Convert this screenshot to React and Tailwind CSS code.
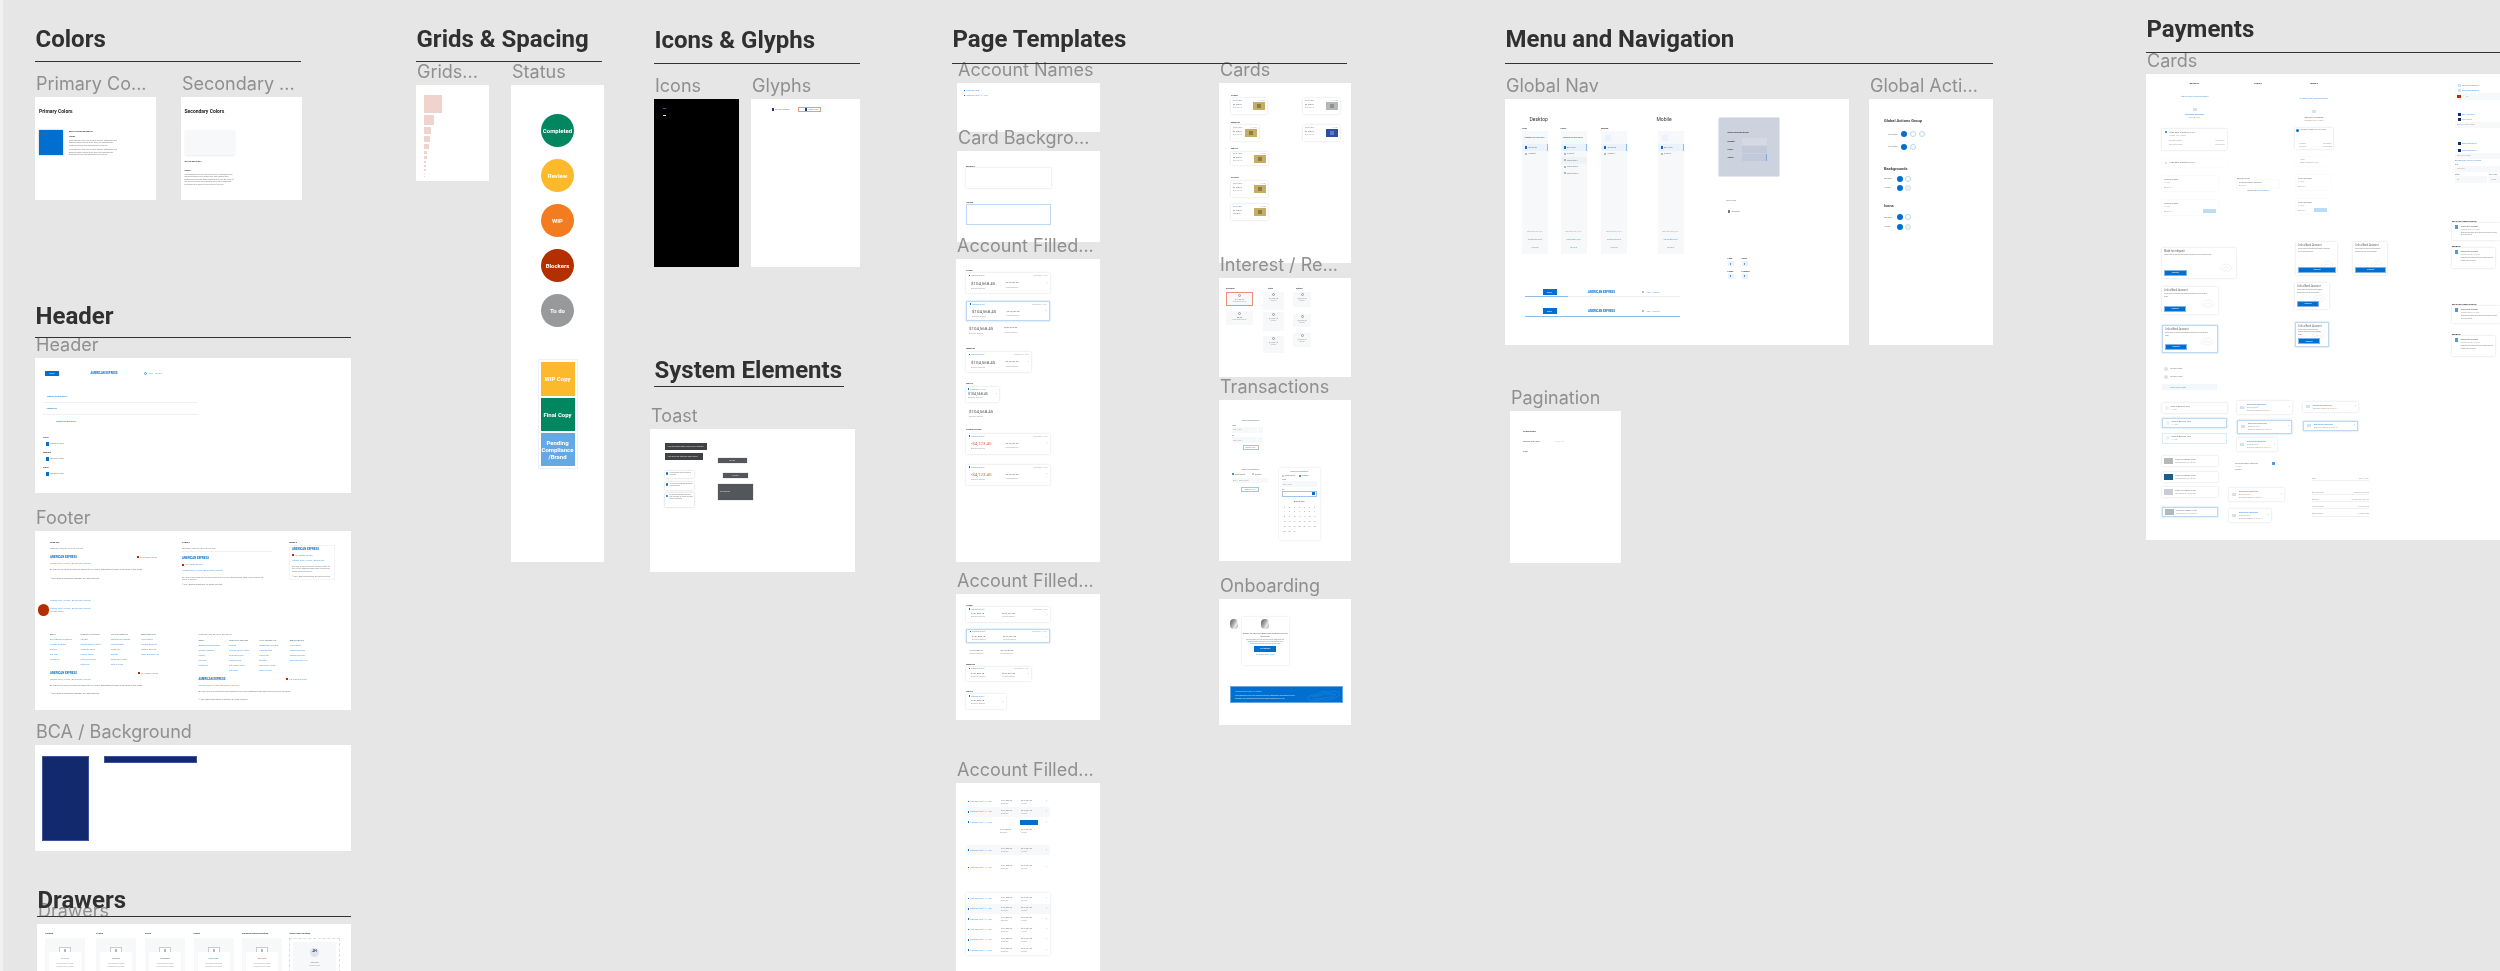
import React from "react";

// text styles for the tiny copy inside the board thumbnails
const tiny = "text-[2px] leading-[3px] text-[#777777]";
const tinyDark = "text-[2px] leading-[3px] text-[#555555]";
const sub = "text-[1.8px] leading-[3px] text-[#a6a6a6]";
const subDark = "text-[1.8px] leading-[3px] text-[#666666]";
const subRed = "text-[1.8px] leading-[3px] text-[#d9644a]";
const subSm = "text-[1.6px] leading-[2.5px] text-[#a6a6a6]";
const link = "text-[2px] leading-[3px] text-[#4a9be4]";
const linkBold = "text-[2.2px] leading-[3px] font-bold text-[#4a9be4]";
const head = "text-[2.2px] leading-[3px] font-bold text-[#333333]";
const amex = "text-[2.8px] leading-[3px] font-bold text-[#006fcf]";
const amexSm = "text-[2.1px] leading-[3px] font-bold text-[#2f86d6]";
const para = "whitespace-normal text-[1.9px] leading-[2.5px] text-[#808080]";
const paraSm = "whitespace-normal text-[1.6px] leading-[2.2px] text-[#808080]";
const money = "text-[4.4px] leading-[5px] text-[#555555]";
const moneyRed = "text-[4.4px] leading-[5px] text-[#d9644a]";
const moneySm = "text-[2.4px] leading-[3px] text-[#666666]";

const COPY = "Card Members can view account activity, statements and payment details online at any time, and manage their preferences from this page whenever they like.";
const LONG = "All users of our online services are subject to our Privacy Statement and agree to be bound by the Terms of Service.";
const shadow = "shadow-[0_0_2px_rgba(0,0,0,0.16)]";
const hover = "border-[0.5px] border-[#bcd8f3] shadow-[0_0_2px_rgba(0,111,207,0.3)]";

const Frame = ({ label, className, box, children }) => (
  <section className={`absolute flex flex-col ${className}`}>
    <h3 className="h-[26px] pl-px text-[18px] leading-[26px] font-normal font-['Inter',sans-serif] text-[#8f8f8f]">{label}</h3>
    <div className={box}>{children}</div>
  </section>
);

const Heading = ({ className, children }) => (
  <header className={`absolute border-b-[1.5px] border-[#333333] ${className}`}>
    <h2 className="pl-[0.5px] text-[24px] leading-[30px] font-bold text-[#303030]">{children}</h2>
  </header>
);

const Chevron = ({ className = "" }) => <span className={`text-[3.5px] leading-[3px] text-[#4a9be4] ${className}`}>›</span>;

const HeaderBar = () => (
  <div className="flex items-center h-[6px]">
    <div className="flex w-[14px] h-[5.5px] items-center justify-center bg-[#006fcf] text-[2px] text-white">Menu</div>
    <p className={`${amex} ml-[31.6px]`}>AMERICAN EXPRESS</p>
    <div className="flex items-center gap-[2px] ml-[27px]">
      <span className="size-[2.4px] rounded-full border-[0.4px] border-[#4a9be4]" />
      <p className={link}>Help</p>
      <p className={link}>Log Out</p>
    </div>
  </div>
);

const statusCircles = [
  ["bg-[#00875f]", "Completed"], ["bg-[#fdb92c]", "Review"], ["bg-[#f27c1f]", "WIP"], ["bg-[#b32f00]", "Blockers"], ["bg-[#97999b]", "To do"],
];
const statusTiles = [
  ["bg-[#fdb92c] h-[34px]", "WIP Copy"], ["bg-[#00875f] h-[33px]", "Final Copy"], ["bg-[#66a9e2] h-[33px]", "Pending Compliance /Brand"],
];
const gridSizes = ["size-[18px]", "size-[10px]", "size-[7px]", "size-[6px]", "size-[5px]", "size-[3px]", "size-[3px]", "size-[2px]", "size-[2px]", "size-[1.5px]", "size-[1px]", "size-[1px]"];

const Colors = () => (
  <div className="flex flex-col pl-[4px] pt-[11px]">
    <p className="text-[5px] leading-[6px] font-bold text-[#222222]">Primary Colors</p>
    <div className="flex gap-[6px] mt-[16px]">
      <div className="w-[24px] h-[25px] bg-[#006fcf] shadow-[0_0_2px_rgba(0,0,0,0.3)]" />
      <div className="flex flex-col w-[53px]">
        <p className={head}>BRIGHT BLUE 0x006FCF</p>
        <p className={`${head} mt-[1.5px]`}>Usage</p>
        <p className={`${para} mt-[1px]`}>{COPY}</p>
        <p className={`${para} mt-[2px]`}>{COPY}</p>
      </div>
    </div>
  </div>
);

const SecondaryColors = () => (
  <div className="flex flex-col pl-[3.5px] pt-[11px]">
    <p className="text-[5px] leading-[6px] font-bold text-[#222222]">Secondary Colors</p>
    <div className="w-[50px] h-[25px] mt-[16px] rounded-[1px] bg-[#f7f8f9] shadow-[0_1px_2px_rgba(0,0,0,0.08)]" />
    <p className={`${head} mt-[4.5px]`}>WHITE 0xF7F8F9</p>
    <p className={`${head} mt-[6px]`}>Usage</p>
    <p className={`${para} w-[49px] mt-[1px]`}>{COPY} {LONG}</p>
  </div>
);

const Status = () => (
  <div className="flex flex-col items-center pt-[28.5px]">
    <div className="flex flex-col gap-[12px]">
      {statusCircles.map(([bg, name]) => (
        <div key={name} className={`flex size-[33px] items-center justify-center rounded-full text-[6px] font-bold text-white ${bg}`}>{name}</div>
      ))}
    </div>
    <div className="flex flex-col gap-[2px] mt-[32px] p-[2px] border-[0.5px] border-[#f0eefa]">
      {statusTiles.map(([bg, name]) => (
        <div key={name} className={`flex w-[34px] items-center justify-center whitespace-normal text-center text-[6px] leading-[7px] font-bold text-white ${bg}`}>{name}</div>
      ))}
    </div>
  </div>
);

const HeaderFrame = () => (
  <div className="flex flex-col pl-[10px] pt-[12.6px]">
    <HeaderBar />
    <div className="flex flex-col w-[155px] mt-[15px] -ml-[2px]">
      <div className="flex h-[11.5px] items-center pl-[4px] border-b-[0.4px] border-[#f0f0f0]"><p className={amexSm}>AMERICAN EXPRESS</p></div>
      <div className="flex h-[11.5px] items-center pl-[3.5px] border-b-[0.4px] border-[#f0f0f0]"><p className={amexSm}>AMERICAN</p></div>
      <div className="flex h-[13px] items-center pl-[13px]"><p className={amexSm}>AMERICAN EXPRESS</p></div>
    </div>
    <div className="flex flex-col gap-[5px] mt-[8px] -ml-[2px]">
      {["Large", "Medium", "Small"].map((n) => (
        <div key={n} className="flex flex-col gap-[3px]">
          <p className={head}>{n}</p>
          <div className="flex items-center gap-[1.5px] pl-[3px] h-[4px]">
            <span className="w-[3px] h-[4px] bg-[#006fcf]" />
            <p className={tiny}>Account Home</p>
          </div>
        </div>
      ))}
    </div>
  </div>
);

const Flag = () => (
  <div className="flex items-center gap-[1px]">
    <span className="size-[2px] bg-[#b32f00]" />
    <p className={tiny}>US</p>
    <p className={link}>Change Country</p>
  </div>
);
const FooterLinks = () => <p className={link}>Website Rules | Privacy | Ad Choices | Security</p>;

const FootBrand = ({ gap }) => (
  <div className="flex flex-col gap-[3.3px]">
    <div className={`flex items-center ${gap}`}>
      <p className={amex}>AMERICAN EXPRESS</p>
      <Flag />
    </div>
    <FooterLinks />
    <p className={tiny}>All users of our online services are subject to our Privacy Statement and agree to be bound by the Terms.</p>
    <p className={`${tiny} mt-[2px]`}>© 2021 American Express Company. All rights reserved.</p>
  </div>
);

const footCols = [
  ["ABOUT", ["About American Express", "Investor Relations", "Careers", "Site Map", "Contact Us"]],
  ["PRODUCTS & SERVICES", ["Card Art", "View All Cards & Offers", "Corporate Cards", "Prepaid Cards", "Gift Cards & More", "Gift Cards"]],
  ["LINKS YOU MAY LIKE", ["Membership Rewards", "Travel Benefits", "Credit Intel", "Benefits", "Smart Earn Points", "Refer a Friend"]],
  ["ADDITIONAL INFO", ["Find Support", "Contact Business", "Manage Account", "Small Business Hub"]],
];
const FootGrid = () => (
  <div className="grid grid-cols-[30.4px_30.4px_30.4px_30.4px]">
    {footCols.map(([name, items]) => (
      <div key={name} className="flex flex-col gap-[2px]">
        <p className={subDark}>{name}</p>
        {items.map((i) => <p key={i} className={link}>{i}</p>)}
      </div>
    ))}
  </div>
);

const Footer = () => (
  <div className="flex flex-col h-full">
    <div className="flex pl-[15px] pt-[10px] h-[68px]">
      <div className="flex flex-col w-[132px]">
        <p className={head}>DESKTOP</p>
        <p className={`${tiny} mt-[3.3px] mb-[5.5px]`}>Last login: Wed, 09/16/21 at 4:32 PM</p>
        <FootBrand gap="gap-[60px]" />
      </div>
      <div className="flex flex-col w-[107px]">
        <p className={head}>TABLET</p>
        <p className={`${tiny} mt-[3.3px] pb-[1px] mb-[4.5px] w-[90px] border-b-[0.4px] border-[#f0f0f0]`}>Last login: Wed, 09/16/21 at 4:32 PM</p>
        <p className={amex}>AMERICAN EXPRESS</p>
        <div className="mt-[3.3px] mb-[3.3px]"><Flag /></div>
        <FooterLinks />
        <p className={`${para} w-[86px] mt-[3.3px]`}>{LONG}</p>
        <p className={`${tiny} mt-[2px]`}>© 2021 American Express. All rights reserved.</p>
      </div>
      <div className="flex flex-col w-[46px]">
        <p className={head}>MOBILE</p>
        <div className="flex flex-col gap-[2.6px] mt-[1px] p-[2px] border-[0.4px] border-[#f4f4f4]">
          <p className={amex}>AMERICAN EXPRESS</p>
          <Flag />
          <p className={`${link} whitespace-normal`}>Website Rules | Privacy | Ad Choices</p>
          <p className={para}>{LONG}</p>
          <p className={para}>© 2021 American Express. All rights reserved.</p>
        </div>
      </div>
    </div>
    <div className="pl-[15px]"><FooterLinks /></div>
    <div className="flex items-center gap-[1.5px] pl-[2.5px] mt-[1.5px]">
      <span className="w-[11px] h-[12px] rounded-full bg-[#b32f00]" />
      <div className="flex flex-col">
        <FooterLinks />
        <p className={link}>Security Center</p>
      </div>
    </div>
    <div className="flex gap-[26.5px] pl-[15px] mt-[17px]">
      <div className="flex flex-col w-[122px]">
        <FootGrid />
        <div className="mt-[6px]"><FootBrand gap="gap-[61px]" /></div>
      </div>
      <div className="flex flex-col w-[122px]">
        <p className={`${tiny} mb-[3.5px]`}>Last login: Wed, 09/16/21 at 4:32 PM</p>
        <FootGrid />
        <div className="mt-[5.5px]"><FootBrand gap="gap-[61px]" /></div>
      </div>
    </div>
  </div>
);

const drawers = [
  ["Pending", "PENDING", "text-[#9a9a9a]"], ["Posted", "ELIGIBLE", "text-[#2f9c75]"], ["Failed", "REVERSED", "text-[#666666]"],
  ["Return", "RETURNED", "text-[#2f9c75]"], ["Response During Dictation", "DECLINED", "text-[#d9644a]"],
];
const Drawers = () => (
  <div className="grid grid-cols-[51px_49px_48.5px_48.5px_47px_51px] pl-[8px] pt-[7.5px]">
    {drawers.map(([name, tag, color]) => (
      <div key={tag} className="flex flex-col gap-[3px]">
        <p className={head}>{name}</p>
        <div className="flex flex-col items-center w-[40px] h-[40px] bg-[#f7f8f9] pt-[9.5px]">
          <div className="flex justify-center w-[12px] h-[8px] bg-white border-[0.5px] border-[#c9cccf]"><span className="w-[2px] h-[5px] mt-[1px] bg-[#b5b8ba]" /></div>
          <div className="flex flex-col items-center w-[32px] h-[22px] -mt-[3px] bg-white pt-[5px]">
            <p className={`text-[2px] leading-[3px] ${color}`}>{tag}</p>
            <p className={`${sub} mt-[2px]`}>Your request is being</p>
            <p className={sub}>reviewed by our team</p>
          </div>
        </div>
      </div>
    ))}
    <div className="flex flex-col gap-[3px]">
      <p className={head}>Home Label Variation</p>
      <div className="p-[3px] w-[51px] h-[40px] border-[0.5px] border-dashed border-[#cfe3d7]">
        <div className="flex flex-col items-center h-full pt-[6px] rounded-[1px] bg-[#f7f8f9]">
          <div className="flex size-[9px] items-center justify-center rounded-full bg-[#dfe3ee] text-[3.4px] font-bold text-[#12296e]">JH</div>
          <p className={`${tiny} mt-[4px]`}>Jane Doe</p>
          <p className={sub}>View Account</p>
        </div>
      </div>
    </div>
  </div>
);

const toasts = [
  ["h-[7.5px]", "Your payment was received by our team"],
  ["h-[8px]", "Your account settings have been saved just now"],
  ["h-[13.5px]", "An account update is pending and may take up to two business days to complete."],
];
const Toast = () => (
  <div className="flex gap-[11px] pl-[14.5px] pt-[14px]">
    <div className="flex flex-col w-[42px]">
      <div className="flex items-center h-[7px] pl-[3px] bg-[#3f4245] text-[2px] text-[#dddddd]">Your payment details have been updated</div>
      <div className="flex items-center w-[38px] h-[7px] mt-[3px] pl-[3px] bg-[#3f4245] text-[2px] text-[#dddddd]">Your account settings were saved</div>
      <div className="flex flex-col gap-[3.5px] mt-[10.5px]">
        {toasts.map(([h, text]) => (
          <div key={h} className={`flex gap-[1.5px] w-[29.5px] p-[1px] bg-white shadow-[0_0_2px_rgba(0,0,0,0.25)] ${h}`}>
            <span className="shrink-0 size-[2.6px] mt-[0.5px] rounded-full bg-[#006fcf]" />
            <p className={paraSm}>{text}</p>
          </div>
        ))}
      </div>
    </div>
    <div className="flex flex-col pt-[14.5px]">
      <div className="flex w-[29px] h-[5px] items-center justify-center bg-[#53565a] text-[2px] text-[#dddddd] shadow-[0_0_1px_rgba(0,0,0,0.4)]">Tooltip</div>
      <div className="flex w-[24.5px] h-[5.5px] mt-[10px] ml-[5.5px] items-center justify-center bg-[#53565a] text-[2px] text-[#dddddd] shadow-[0_0_1px_rgba(0,0,0,0.4)]">Tooltip</div>
      <div className="flex w-[34.5px] h-[16px] mt-[5.5px] ml-[0.5px] items-center pl-[2px] bg-[#53565a] text-[2px] text-[#dddddd] shadow-[0_0_1px_rgba(0,0,0,0.4)]">Tooltip text</div>
    </div>
  </div>
);

const AccName = ({ children = "Platinum Card®" }) => (
  <div className="flex items-center gap-[0.8px]">
    <span className="w-[1.4px] h-[1.6px] bg-[#006fcf]" />
    <p className={link}>{children}</p>
  </div>
);

const AccCard = ({ w, state = shadow, red }) => (
  <div className={`flex flex-col h-[20px] px-[2.5px] pt-[1px] bg-white ${w} ${state}`}>
    <div className="flex justify-between">
      <AccName />
      <p className={sub}>Checking ••• 1234</p>
    </div>
    <div className="flex items-center mt-[3.5px] pl-[2.5px]">
      <div className="flex flex-col w-[34.5px]">
        <p className={red ? moneyRed : money}>{red ? "-$4,123.45" : "$104,568.45"}</p>
        <p className={`${sub} mt-[1px]`}>Available Balance</p>
      </div>
      <div className="flex flex-col flex-1">
        <p className={moneySm}>$243,267.52</p>
        <p className={`${sub} mt-[1.5px]`}>Present Balance</p>
      </div>
      <Chevron className="-mt-[4px]" />
    </div>
  </div>
);

const PlainBalance = ({ small }) => (
  <div className="flex pl-[3px]">
    <div className="flex flex-col w-[35px]">
      <p className={money}>$104,568.45</p>
      <p className={`${sub} mt-[1px]`}>Available Balance</p>
    </div>
    {!small && (
      <div className="flex flex-col">
        <p className={moneySm}>$592,362.52</p>
        <p className={`${sub} mt-[2px]`}>Present Balance</p>
      </div>
    )}
  </div>
);

const CardBackgrounds = () => (
  <div className="flex flex-col pl-[9px] pt-[13.5px]">
    <p className={head}>DEFAULT</p>
    <div className={`w-[84.5px] h-[20.5px] bg-white ${shadow}`} />
    <p className={`${head} mt-[12.5px]`}>HOVER</p>
    <div className="w-[84.5px] h-[21px] bg-white border-[0.8px] border-[#bcd8f3]" />
  </div>
);

const AccountFilledLarge = () => (
  <div className="flex flex-col pl-[10px] pt-[9.5px]">
    <p className={head}>LARGE</p>
    <div className="mt-[1.5px]"><AccCard w="w-[84px]" /></div>
    <div className="mt-[7.5px]"><AccCard w="w-[84px]" state={hover} /></div>
    <div className="mt-[5px] h-[12px]"><PlainBalance /></div>
    <p className={`${head} mt-[9.5px]`}>MEDIUM</p>
    <div className="mt-[2px]"><AccCard w="w-[65px]" /></div>
    <p className={`${head} mt-[9.5px]`}>SMALL</p>
    <div className={`flex flex-col w-[33px] h-[15px] mt-[2.5px] px-[2px] pt-[0.5px] bg-white ${shadow}`}>
      <AccName>Platinum ••• 1234</AccName>
      <div className="flex items-center justify-between mt-[1.5px]">
        <p className="text-[3.6px] leading-[4px] text-[#555555]">$104,568.45</p>
        <Chevron />
      </div>
      <p className={sub}>Available Balance</p>
    </div>
    <div className="mt-[7px] h-[9px]"><PlainBalance small /></div>
    <p className={`${head} mt-[9.5px]`}>CARDS STATES</p>
    <div className="mt-[3px]"><AccCard w="w-[84px]" red /></div>
    <div className="mt-[11.2px]"><AccCard w="w-[84px]" red /></div>
  </div>
);

const Balances = ({ w = "w-[31px]" }) => (
  <div className="flex pl-[2.5px]">
    <div className={`flex flex-col ${w}`}>
      <p className={moneySm}>$104,568.45</p>
      <p className={sub}>Available Balance</p>
    </div>
    {w !== "w-[26px]" && (
      <div className="flex flex-col">
        <p className={moneySm}>$243,267.52</p>
        <p className={sub}>Present Balance</p>
      </div>
    )}
  </div>
);

const RowCard = ({ w, state = shadow, short }) => (
  <div className={`flex flex-col h-[14.5px] px-[2.5px] pt-[0.5px] bg-white ${w} ${state}`}>
    <div className="flex justify-between">
      <AccName />
      {!short && <p className={sub}>Checking ••• 1234</p>}
    </div>
    <div className="flex items-center justify-between mt-[1.5px]">
      <Balances w={short ? "w-[26px]" : "w-[31px]"} />
      <Chevron />
    </div>
  </div>
);

const AccountFilledCompact = () => (
  <div className="flex flex-col pl-[10px] pt-[9.5px]">
    <p className={head}>LARGE</p>
    <div className="mt-[0.5px]"><RowCard w="w-[84px]" /></div>
    <div className="mt-[7.2px]"><RowCard w="w-[84px]" state={hover} /></div>
    <div className="mt-[6px] pl-[1px]"><Balances /></div>
    <p className={`${head} mt-[8px]`}>MEDIUM</p>
    <div className="mt-[0.5px]"><RowCard w="w-[65px]" /></div>
    <p className={`${head} mt-[9px]`}>SMALL</p>
    <div className="mt-[1px]"><RowCard w="w-[40px]" short /></div>
  </div>
);

const ListRow = ({ button, striped, className = "" }) => (
  <div className={`grid grid-cols-[33px_20px_25px_6px] items-center h-[10.3px] px-[2px] ${striped ? "bg-[#f7f8f9]" : ""} ${className}`}>
    <AccName>Platinum Card® ••• 1234</AccName>
    {button ? <span /> : (
      <div className="flex flex-col">
        <p className={tiny}>$104,568.45</p>
        <p className={sub}>Available</p>
      </div>
    )}
    {button ? <div className="w-[18px] h-[5px] -ml-[1px] bg-[#006fcf]" /> : (
      <div className="flex flex-col">
        <p className={tiny}>$243,267.52</p>
        <p className={sub}>Present</p>
      </div>
    )}
    <Chevron />
  </div>
);

const AccountFilledList = () => (
  <div className="flex flex-col pl-[10px] pt-[13.5px] w-[94px]">
    <ListRow />
    <ListRow striped />
    <ListRow button />
    <div className="pl-[34px] mt-[1px] flex">
      <div className="flex flex-col w-[21px]"><p className={tiny}>$104,568.45</p><p className={sub}>Available</p></div>
      <div className="flex flex-col"><p className={tiny}>$243,267.52</p><p className={sub}>Present</p></div>
    </div>
    <ListRow striped className="mt-[10.5px]" />
    <ListRow className="mt-[7px]" />
    <div className={`flex flex-col mt-[21px] bg-white ${shadow}`}>
      <ListRow />
      <ListRow striped />
      <ListRow />
      <ListRow />
      <ListRow />
      <ListRow />
    </div>
  </div>
);

const MiniCard = ({ w, h = "h-[16px]", art = "bg-[#c5ae63]", mark = "bg-[#6b5d2e]", red }) => (
  <div className={`flex flex-col px-[2px] pt-[0.5px] bg-white ${w} ${h} ${shadow}`}>
    <div className="flex justify-between">
      <p className={link}>Gold Card</p>
      <p className={sub}>••• 1234</p>
    </div>
    <div className="flex justify-between items-center">
      <div className="flex flex-col">
        <p className={tinyDark}>$2,345.67</p>
        <p className={red ? subRed : sub}>{red ? "Past Due" : "Due Sep 18"}</p>
      </div>
      <div className={`flex w-[12px] h-[8px] items-center justify-center ${art}`}>
        <span className={`w-[4px] h-[4px] opacity-60 ${mark}`} />
      </div>
    </div>
  </div>
);

const CardsFrame = () => (
  <div className="flex gap-[35px] pl-[12px] pt-[11px]">
    <div className="flex flex-col w-[37px]">
      <p className={head}>LARGE</p>
      <div className="mt-[1px]"><MiniCard w="w-[36px]" /></div>
      <p className={`${head} mt-[6.5px]`}>MEDIUM</p>
      <div className="mt-[1.5px]"><MiniCard w="w-[28px]" /></div>
      <p className={`${head} mt-[5.5px]`}>SMALL</p>
      <div className="mt-[2px]"><MiniCard w="w-[37px]" h="h-[13px]" /></div>
      <p className={`${head} mt-[11px]`}>STATES</p>
      <div className="mt-[2.5px]"><MiniCard w="w-[37px]" /></div>
      <div className="mt-[7px]"><MiniCard w="w-[37px]" red /></div>
    </div>
    <div className="flex flex-col w-[37px] pt-[4px]">
      <MiniCard w="w-[37px]" art="bg-[#b5b8ba]" mark="bg-[#777777]" />
      <div className="mt-[11px]"><MiniCard w="w-[37px]" art="bg-[#2a4ea2]" mark="bg-[#7f9ad6]" /></div>
    </div>
  </div>
);

const Tile = ({ className, amount = "$4,723.45", text = "Interest" }) => (
  <div className={`flex flex-col items-center pt-[1px] bg-[#f7f8f9] ${className}`}>
    <span className="size-[3px] rounded-full border-[0.5px] border-[#999999]" />
    <p className={`${tiny} mt-[1px]`}>{amount}</p>
    <p className={subSm}>{text}</p>
  </div>
);

const InterestFrame = () => (
  <div className="flex pl-[7px] pt-[9px]">
    <div className="flex flex-col w-[37px]">
      <p className={head}>Earnings</p>
      <Tile className="w-[27px] h-[14px] mt-[1.5px] border-[0.5px] border-[#e8907a]" text="Interest this period" />
      <Tile className="w-[27px] h-[14px] mt-[5px]" amount="$0.00" text="Rewards this period" />
    </div>
    <div className="flex flex-col w-[30px]">
      <p className={`${head} pl-[5px]`}>Total</p>
      <Tile className="w-[21px] h-[18px] mt-[1.5px]" />
      <Tile className="w-[21px] h-[19px] mt-[2px]" />
      <Tile className="w-[21px] h-[17px] mt-[5px]" />
    </div>
    <div className="flex flex-col w-[18px]">
      <p className={`${head} pl-[3px]`}>Return</p>
      <Tile className="w-[18px] h-[15px] mt-[1.5px]" />
      <Tile className="w-[18px] h-[13px] mt-[7px]" />
      <Tile className="w-[18px] h-[14px] mt-[6px]" />
    </div>
  </div>
);

const Field = ({ children, className = "" }) => (
  <div className={`flex items-center pl-[1px] bg-[#f7f8f9] ${className}`}>
    <p className={sub}>{children}</p>
  </div>
);
const OutlineButton = ({ className }) => (
  <div className={`flex h-[5px] items-center justify-center bg-white border-[0.5px] border-[#9cc6ec] ${className}`}>
    <p className={link}>Export CSV</p>
  </div>
);
const Radio = ({ on, className = "" }) => (
  <span className={`shrink-0 size-[2px] rounded-full ${on ? "bg-[#006fcf]" : "border-[0.3px] border-[#aaaaaa]"} ${className}`} />
);

const calendarDays = Array.from({ length: 31 }, (_, i) => i + 1);
const TransactionsFrame = () => (
  <div className="flex gap-[10px] pl-[13px] pt-[19px]">
    <div className="flex flex-col w-[37px]">
      <p className={`${tiny} text-center`}>Export Transactions</p>
      <p className={`${subDark} mt-[1.5px]`}>From</p>
      <div className="flex gap-[0.5px]"><Field className="w-[25px] h-[6px]">Sep 1, 2021</Field><Field className="w-[5px] h-[6px]" /></div>
      <p className={`${subDark} mt-[1.5px]`}>To</p>
      <div className="flex gap-[0.5px]"><Field className="w-[25px] h-[6px]">Sep 9, 2021</Field><Field className="w-[5px] h-[6px]" /></div>
      <OutlineButton className="w-[16px] mt-[2px] ml-[10.5px]" />
      <p className={`${tiny} text-center mt-[17.5px]`}>Export Transactions</p>
      <div className="flex items-center gap-[1px] mt-[2px]">
        <Radio on /><p className={subDark}>Most Recent</p>
        <Radio className="ml-[6px]" /><p className={subDark}>Custom</p>
      </div>
      <Field className="w-[36px] h-[5px] mt-[2px]">Aug 1 - Sep 30, 2021</Field>
      <OutlineButton className="w-[18px] mt-[4px] ml-[9px]" />
    </div>
    <div className="flex flex-col w-[41px] h-[72px] mt-[49px] px-[3px] pt-[2px] bg-white shadow-[0_0_2px_rgba(0,0,0,0.12)]">
      <p className={`${tiny} text-center`}>Export Transactions</p>
      <div className="flex items-center gap-[1px] mt-[1px]">
        <Radio /><p className={subDark}>Most Recent</p>
        <Radio on className="ml-[3px]" /><p className={subDark}>Custom</p>
      </div>
      <p className={`${subDark} mt-[1px]`}>From</p>
      <Field className="h-[6px]">Sep 1, 2021</Field>
      <p className={`${subDark} mt-[1px]`}>To</p>
      <div className="flex h-[5.5px] items-center justify-end pr-[1.5px] bg-white border-[0.5px] border-[#9cc6ec]">
        <span className="w-[2.5px] h-[3px] bg-[#006fcf]" />
      </div>
      <p className={`${tinyDark} text-center mt-[3px]`}>August 2021</p>
      <div className="grid grid-cols-7 mt-[2px] text-center text-[1.8px] leading-[4.9px] text-[#777777]">
        {["S", "M", "T", "W", "T", "F", "S"].map((d, i) => <span key={i}>{d}</span>)}
        {calendarDays.map((d) => <span key={d}>{d}</span>)}
      </div>
    </div>
  </div>
);

const Avatar = () => <div className="w-[8px] h-[10px] rounded-full bg-[linear-gradient(120deg,#555_0%,#aaa_45%,#eee_70%,#888_100%)]" />;

const OnboardingFrame = () => (
  <div className="flex flex-col pl-[11px] pt-[18px]">
    <div className="flex gap-[4px]">
      <div className="pt-[2px]"><Avatar /></div>
      <div className="flex flex-col items-center w-[46.5px] h-[48px] pt-[2px] bg-white shadow-[0_0_2px_rgba(0,0,0,0.14)]">
        <Avatar />
        <p className="mt-[2.5px] whitespace-normal text-center text-[2.4px] leading-[3.4px] text-[#666666]">Ready to have an American Express online account?</p>
        <p className="mt-[0.5px] w-[38px] whitespace-normal text-center text-[1.5px] leading-[1.9px] text-[#808080]">{COPY}</p>
        <div className="flex w-[22px] h-[6px] mt-[1px] items-center justify-center bg-[#006fcf] text-[2px] text-white">Get Started</div>
        <p className={`${link} mt-[1.5px]`}>Go to Account Home</p>
      </div>
    </div>
    <div className="relative flex flex-col w-[113px] h-[17px] mt-[21px] pl-[4px] pt-[3px] bg-[#006fcf] border-[0.5px] border-[#66a9e2]">
      <p className="text-[2.4px] leading-[4px] text-[#a8d0f2]">Onboarding with FinxBOX</p>
      <p className="text-[1.9px] leading-[3px] text-[#d2e6f7]">Card Members can view account activity, statements and details online.</p>
      <p className="text-[1.9px] leading-[3px] text-[#d2e6f7]">Manage your preferences from this page whenever you like.</p>
      <svg className="absolute right-[1px] top-[2px] w-[34px] h-[14px]" viewBox="0 0 34 14" fill="none" stroke="#2f8bdc" strokeWidth="0.5">
        <path d="M1 8c4-3 7-1 10-3s6-3 9-2 6-2 11 0c3 2 1 5-3 6s-6 3-10 2-6 1-10 1-9-1-7-4z" />
        <path d="M5 8c4-2 6 0 9-2s6-1 9-1 4 0 6 1" />
        <path d="M6 10c4 0 8 0 11-1s7 0 10-2" />
      </svg>
    </div>
  </div>
);

const NavItem = ({ children, active, tint }) => (
  <div className={`flex items-center gap-[1.3px] h-[6.5px] pl-[3px] ${active ? "bg-[#eaf3fb] border-r-[1px] border-[#8cbdea]" : ""} ${tint ? "bg-[#eff3f7]" : ""}`}>
    <span className={active ? "w-[2.2px] h-[2.6px] bg-[#006fcf]" : "w-[2.2px] h-[2.4px] bg-[#b5b8ba]"} />
    <p className={tiny}>{children}</p>
  </div>
);

const NavPanel = ({ name, logo, open }) => (
  <div className="flex flex-col">
    <p className={`${head} h-[3px]`}>{name}</p>
    <div className="flex flex-col w-[26px] h-[123px] mt-[1.5px] bg-[#f7f8f9]">
      <div className="flex items-center h-[13px] pl-[2.5px]">
        {logo ? <p className={amexSm}>AMERICAN EXPRESS</p> : <span className="ml-[1.5px] size-[6px] bg-[#eaf3fb]" />}
      </div>
      <NavItem active>Accounts</NavItem>
      <NavItem>Support</NavItem>
      {open && <NavItem tint>Menu Item 1</NavItem>}
      {open && <NavItem>Menu Item 2</NavItem>}
      {open && <NavItem>Menu Item 3</NavItem>}
      <div className="flex flex-col items-center gap-[5px] mt-auto pb-[5px]">
        <p className={sub}>Last login: 09/16/21</p>
        <p className={link}>Switch Account</p>
        <p className={link}>Log Out</p>
      </div>
    </div>
  </div>
);

const menuRows = [
  ["Default", "bg-[#d4d9e4]"], ["Hover", "bg-[#c1c9db]"], ["Active", "bg-[#c1c9db] border-r-[1.2px] border-[#7fa9dc]"],
];
const stateBoxes = ["Load", "Hover", "Focus", "Pressed"];

const GlobalNav = () => (
  <div className="flex pl-[17px] pt-[17.5px]">
    <div className="flex flex-col w-[196px]">
      <div className="flex h-[6px] items-center text-[5px] text-[#333333]">
        <p className="ml-[7.5px] w-[127px]">Desktop</p>
        <p>Mobile</p>
      </div>
      <div className="grid grid-cols-[38.5px_40.5px_56.5px_26px] mt-[4px]">
        <NavPanel name="Load" logo />
        <NavPanel name="Hover" logo open />
        <NavPanel name="Expand" />
        <NavPanel name="" />
      </div>
      <div className="flex flex-col w-[155px] mt-[35px] ml-[2.5px]">
        <div className="pl-[18px]"><HeaderBar /></div>
        <div className="h-[1px] mt-[1px] bg-[linear-gradient(to_right,#8cbdea_28%,#eeeeee_28%)]" />
        <div className="pl-[18px] mt-[11px]"><HeaderBar /></div>
        <div className="h-[1.2px] mt-[1.5px] bg-[#8cbdea]" />
      </div>
    </div>
    <div className="flex flex-col w-[62px] pt-0">
      <div className="flex flex-col w-[61.7px] h-[60.5px] pl-[8.5px] pt-[13.5px] rounded-[2px] bg-[#ccd2de] border-[0.5px] border-[#e2e6ee]">
        <p className={head}>MENU BACKGROUND</p>
        <div className="flex flex-col gap-[1px] mt-[3.5px]">
          {menuRows.map(([name, bg]) => (
            <div key={name} className="flex items-center">
              <p className={`${head} w-[14.4px]`}>{name}</p>
              <span className={`w-[25.6px] h-[7px] ${bg}`} />
            </div>
          ))}
        </div>
      </div>
      <p className={`${tiny} ml-[8.5px] mt-[22px]`}>Menu Item</p>
      <div className="flex items-center gap-[1.5px] ml-[9.5px] mt-[8px]">
        <span className="size-[2.4px] bg-[#777777]" />
        <p className={tiny}>Accounts</p>
      </div>
      <div className="grid grid-cols-[14px_14px] gap-y-[3.5px] ml-[9.5px] mt-[44px]">
        {stateBoxes.map((s) => (
          <div key={s} className="flex flex-col gap-[1px]">
            <p className={head}>{s}</p>
            <div className="flex w-[6px] h-[5px] items-center justify-center bg-[#eaf3fb]"><span className="w-[1.6px] h-[2px] bg-[#4a9be4]" /></div>
          </div>
        ))}
      </div>
    </div>
  </div>
);

const ActionDots = ({ dots, label, gap = "gap-[3px]" }) => (
  <div className="flex items-center">
    <p className={`${tiny} w-[13px]`}>{label}</p>
    <div className={`flex items-center ${gap}`}>
      {dots.map((d, i) => <span key={i} className={`size-[6px] rounded-full ${d}`} />)}
    </div>
  </div>
);
const blueDot = "bg-[#006fcf]";
const ringDot = "bg-white border-[0.5px] border-[#b9d7f3]";
const greyDot = "bg-[#eef1f5] border-[0.5px] border-[#d5dbe3]";

const GlobalActions = () => (
  <div className="flex flex-col pl-[15px] pt-[19px]">
    <p className="text-[4px] leading-[5px] font-bold text-[#444444]">Global Actions Group</p>
    <div className="flex flex-col gap-[6.7px] mt-[8px] pl-[4px]">
      <ActionDots label="Load State" dots={[blueDot, ringDot, ringDot]} />
      <ActionDots label="Load State" dots={[blueDot, ringDot]} />
    </div>
    <p className="mt-[16px] text-[4px] leading-[5px] font-bold text-[#444444]">Backgrounds</p>
    <div className="flex flex-col gap-[3px] mt-[5px]">
      <ActionDots label="DEFAULT" gap="gap-[2px]" dots={[blueDot, ringDot]} />
      <ActionDots label="HOVER" gap="gap-[2px]" dots={[blueDot, greyDot]} />
    </div>
    <p className="mt-[12.5px] text-[4px] leading-[5px] font-bold text-[#444444]">Icons</p>
    <div className="flex flex-col gap-[3.5px] mt-[6px]">
      <ActionDots label="DEFAULT" gap="gap-[2px]" dots={[blueDot, ringDot]} />
      <ActionDots label="HOVER" gap="gap-[2px]" dots={[blueDot, greyDot]} />
    </div>
  </div>
);

const Pagination = () => (
  <div className="flex flex-col gap-[7px] pl-[13px] pt-[18.5px]">
    <p className={head}>PAGINATION</p>
    <div className="flex">
      <p className={`${tinyDark} w-[31px]`}>Medium and Large</p>
      <p className={sub}>‹ 1 2 3 ... 10 ›</p>
    </div>
    <div className="flex">
      <p className={`${tinyDark} w-[31px]`}>Small</p>
      <p className={sub}>‹ ›</p>
    </div>
  </div>
);

const Promo = ({ w, h, button, title = "Link a Bank Account", state = shadow, className = "" }) => (
  <div className={`relative flex flex-col px-[2px] pt-[2.5px] bg-white ${w} ${h} ${state} ${className}`}>
    <svg className="absolute right-[1px] bottom-[2px] size-[18px]" viewBox="0 0 18 18" fill="none" stroke="#ececec" strokeWidth="0.7">
      <path d="M3 12a6 6 0 0 1 12 0M5 13a4 4 0 0 1 8 0M7 14a2 2 0 0 1 4 0" />
    </svg>
    <p className="text-[2.6px] leading-[3px] text-[#666666]">{title}</p>
    <p className={`${paraSm} relative mt-[1px] pr-[4px]`}>Link a bank account to start making deposits to your savings today.</p>
    <div className={`relative flex h-[6px] items-center justify-center mt-auto mb-[2px] bg-[#006fcf] border-[0.5px] border-[#7fb5e6] text-[2px] text-white ${button}`}>Deposit</div>
  </div>
);

const BankRow = ({ state = shadow, h = "h-[10px]", className = "" }) => (
  <div className={`flex items-center gap-[2px] w-[64.7px] pl-[2.5px] bg-white ${h} ${state} ${className}`}>
    <span className="size-[4px] rounded-full bg-[#eaf3fb]" />
    <div className="flex flex-col">
      <p className={tiny}>Bank of America Corp</p>
      <p className={sub}>••• 1234</p>
    </div>
  </div>
);

const TxnCard = ({ w, h, state = shadow, className = "", twoLine }) => (
  <div className={`flex items-center gap-[3.5px] pl-[2.5px] pr-[2px] bg-white ${w} ${h} ${state} ${className}`}>
    <span className="shrink-0 w-[4px] h-[3px] bg-[#cfe3f5]" />
    <div className="flex flex-col flex-1">
      <p className={linkBold}>Business Checking</p>
      {twoLine && <p className={sub}>Debit Account</p>}
      <p className={sub}>Available balance as of 09/16</p>
    </div>
    <Chevron />
  </div>
);

const ThumbRow = ({ art, state = shadow, className = "" }) => (
  <div className={`flex items-center gap-[2px] w-[55.5px] h-[10px] pl-[2px] bg-white ${state} ${className}`}>
    <span className={`w-[9px] h-[6px] ${art}`} />
    <div className="flex flex-col">
      <p className={tiny}>Travel Purchases x1234</p>
      <p className={sub}>Next payment: 09/30/2021</p>
    </div>
  </div>
);

const ChaseCard = ({ w, highlight, className = "" }) => (
  <div className={`relative flex flex-col h-[15px] pl-[2px] pt-[2px] bg-white shadow-[0_0_1px_rgba(0,0,0,0.1)] ${w} ${className}`}>
    <p className={tiny}>Chase Business</p>
    <p className={sub}>••• 1234</p>
    <p className={`${sub} mt-[2px]`}>BIN Tier 2</p>
    {highlight && <span className="absolute right-[2px] bottom-[2px] w-[13px] h-[3.5px] bg-[#b9dcf7]" />}
  </div>
);

const DetailRow = ({ a, b, className = "" }) => (
  <div className={`flex justify-between h-[4.5px] border-b-[0.3px] border-[#f0f0f0] ${className}`}>
    <p className={sub}>{a}</p>
    <p className={sub}>{b}</p>
  </div>
);

const OptionRow = ({ children, art = "bg-[#cfe3f5]" }) => (
  <div className="flex items-center gap-[1px] pl-[6px]">
    <span className={`size-[3px] ${art}`} />
    <p className={link}>{children}</p>
  </div>
);

const MasterCard = ({ label, h, w, className = "" }) => (
  <div className={`flex flex-col ${className}`}>
    <p className="text-[2.4px] leading-[3px] font-bold text-[#333333]">{label}</p>
    <div className={`flex gap-[2.6px] pl-[3px] pt-[2px] bg-white ${h} ${w} ${shadow}`}>
      <span className="w-[3.4px] h-[4px] bg-[#4a9be4]" />
      <div className="flex flex-col w-[36px]">
        <p className={`${tiny} font-bold`}>Deposit to account</p>
        <p className={sub}>Initiated on 09/16/2021</p>
        <p className={`${paraSm} mt-[1px]`}>Deposits may take up to two business days to post to your account.</p>
      </div>
    </div>
  </div>
);

const Payments = () => (
  <div className="grid grid-cols-[91px_58px_157px_48px] h-full">
    <div className="flex flex-col pl-[16px] pt-[8px]">
      <div className="flex flex-col items-center w-[65px]">
        <p className={head}>DESKTOP</p>
        <p className={`${link} mt-[9.5px]`}>⊕ Add a New Payment Method</p>
        <span className="w-[4px] h-[3px] mt-[10px] bg-[#cfe3f5]" />
        <p className={`${linkBold} mt-[2.5px]`}>Business Checking</p>
        <p className={sub}>Debit Account</p>
      </div>
      <div className={`flex flex-col w-[65px] h-[20.7px] mt-[10px] px-[2.5px] pt-[1.5px] bg-white ${shadow}`}>
        <div className="flex items-center gap-[2px]">
          <span className="size-[2.6px] rounded-full bg-[#006fcf]" />
          <p className={tiny}>HSBC Bank of America x1234</p>
        </div>
        <p className={`${sub} pl-[4.6px]`}>Primary • 09/16/2021</p>
        <div className="flex justify-between mt-[2.5px] pl-[4.6px]"><p className={sub}>Routing Number</p><p className={sub}>021000021</p></div>
        <div className="flex justify-between mt-[1px] pl-[4.6px]"><p className={sub}>Account Number</p><p className={sub}>1234567890</p></div>
      </div>
      <div className="flex items-center gap-[2px] w-[65px] h-[8px] mt-[9.3px] pl-[2.5px] shadow-[0_0_1px_rgba(0,0,0,0.08)]">
        <span className="size-[2.6px] rounded-full border-[0.4px] border-[#cccccc]" />
        <p className={tiny}>HSBC Bank of America x1234</p>
      </div>
      <ChaseCard w="w-[55.5px]" className="mt-[9px]" />
      <ChaseCard w="w-[55.5px]" className="mt-[9px]" highlight />
      <Promo w="w-[74px]" h="h-[30px]" button="w-[22.7px]" title="Make first deposit" className="mt-[33px]" />
      <Promo w="w-[55.5px]" h="h-[27px]" button="w-[22px]" className="mt-[9px]" />
      <Promo w="w-[55.5px]" h="h-[27.7px]" button="w-[22px]" state={hover} className="mt-[11px]" />
      <div className="flex items-center gap-[1.6px] h-[4.4px] mt-[14px] pl-[2px]"><span className="size-[4.4px] rounded-full bg-[#dde1ea]" /><p className={tiny}>Journey State</p></div>
      <div className="flex items-center gap-[1.6px] h-[4.4px] mt-[3.6px] pl-[2px]"><span className="size-[4.4px] rounded-full bg-[#dde1ea]" /><p className={tiny}>Journey Fixed</p></div>
      <div className="flex items-center w-[55px] h-[6px] mt-[5.3px] pl-[8px] bg-[#f3f8fd]"><p className={link}>Project Non-Profit</p></div>
      <BankRow className="mt-[12.3px]" />
      <BankRow state={hover} className="mt-[5px]" />
      <BankRow state="border-[0.5px] border-[#dcebf8]" h="h-[10.3px]" className="mt-[5.7px]" />
      <ThumbRow art="bg-[#b5b8ba]" className="mt-[12px]" />
      <ThumbRow art="bg-[#1c5d8c]" className="mt-[6px]" />
      <ThumbRow art="bg-[#c9cbd6]" className="mt-[5px]" />
      <ThumbRow art="bg-[#b5b8ba]" state={hover} className="mt-[10.7px]" />
    </div>

    <div className="flex flex-col pt-[8px]">
      <p className={`${head} w-[42px] text-center`}>TABLET</p>
      <p className={`${tiny} mt-[92.3px]`}>Bank/Account</p>
      <div className="flex flex-col justify-center w-[42px] h-[8px] pl-[2px] shadow-[0_0_1px_rgba(0,0,0,0.12)]">
        <p className={tiny}>Chase Business Checking</p>
        <p className={sub}>BIN Tier 2</p>
      </div>
      <p className={`${link} w-[42px] text-center mt-[1.2px]`}>Manage Account Details</p>
      <TxnCard w="w-[55px]" h="h-[13.5px]" twoLine className="mt-[208.5px]" />
      <TxnCard w="w-[55px]" h="h-[14px]" twoLine state={hover} className="mt-[5.5px]" />
      <TxnCard w="w-[40px]" h="h-[13px]" twoLine className="mt-[4px]" />
      <div className="flex flex-col w-[40px] mt-[11px] -ml-[2px]">
        <div className="flex justify-between"><p className={tiny}>Chase Business Checking</p><span className="w-[2.6px] h-[3px] bg-[#4a9be4]" /></div>
        <p className={sub}>••• 1234</p>
        <p className={`${link} mt-[0.5px]`}>Remove</p>
      </div>
      <TxnCard w="w-[55px]" h="h-[12.7px]" twoLine className="mt-[17px] -ml-[8px]" />
      <TxnCard w="w-[42px]" h="h-[13px]" twoLine className="mt-[8.3px] -ml-[8px]" />
    </div>

    <div className="flex flex-col pt-[8px]">
      <div className="flex flex-col items-center w-[38px]">
        <p className={head}>MOBILE</p>
        <p className={`${link} mt-[11.5px]`}>⊕ Add a New Payment Method</p>
        <span className="w-[4px] h-[3px] mt-[10px] bg-[#cfe3f5]" />
        <p className={`${linkBold} mt-[3.5px]`}>Business Checking</p>
        <p className={sub}>Debit Account • Primary</p>
      </div>
      <div className={`flex flex-col w-[38px] h-[20.7px] mt-[6px] px-[1px] pt-[1px] bg-white ${shadow}`}>
        <div className="flex gap-[1px]"><span className="shrink-0 size-[2.6px] rounded-full bg-[#006fcf]" /><p className={paraSm}>HSBC Bank of America x1234 Primary</p></div>
        <div className="flex justify-between mt-auto pl-[3.6px]"><p className={sub}>Routing</p><p className={sub}>021000021</p></div>
        <div className="flex justify-between pl-[3.6px] mb-[1px]"><p className={sub}>Account</p><p className={sub}>1234567890</p></div>
      </div>
      <div className="flex flex-col justify-center w-[38px] h-[9px] mt-[8.3px] pl-[5px] shadow-[0_0_1px_rgba(0,0,0,0.08)]">
        <p className={sub}>HSBC</p>
        <p className={sub}>Bank of America x1234</p>
      </div>
      <ChaseCard w="w-[35px]" className="mt-[9px] ml-[1px]" />
      <ChaseCard w="w-[33px]" className="mt-[9px] ml-[1px]" highlight />
      <div className="flex gap-[16px] mt-[28px] ml-[1px]">
        <Promo w="w-[41px]" h="h-[33px]" button="w-[38px]" />
        <Promo w="w-[34px]" h="h-[33px]" button="w-[31px]" />
      </div>
      <Promo w="w-[33.5px]" h="h-[26px]" button="w-[22px]" className="mt-[8px]" />
      <Promo w="w-[34px]" h="h-[25.6px]" button="w-[22px]" state={hover} className="mt-[12.7px]" />
      <TxnCard w="w-[55px]" h="h-[10.3px]" className="mt-[54.4px] ml-[8px]" />
      <TxnCard w="w-[55px]" h="h-[10.3px]" state={hover} className="mt-[8.7px] ml-[8px]" />
      <div className="flex flex-col w-[57px] ml-[17px] mt-[46px]">
        <DetailRow a="Date" b="Sep 16, 2021" className="mb-[9.5px]" />
        <DetailRow a="Account Name" b="Business Checking" className="mb-[2.5px]" />
        <DetailRow a="Address" b="123 Main St, New York" className="mb-[2.5px]" />
        <DetailRow a="Phone Number" b="212 555 0100" className="mb-[2.7px]" />
        <DetailRow a="Bank Address" b="1 Liberty Plaza" />
      </div>
    </div>

    <div className="flex flex-col pt-[9.5px]">
      <OptionRow>Deposit to Account</OptionRow>
      <div className="mt-[2.5px]"><OptionRow>Deposit to Account</OptionRow></div>
      <div className="flex items-center gap-[5px] h-[6.5px] mt-[1px] ml-[3px] pl-[2px] bg-[#f7f8f9]"><span className="w-[4px] h-[3px] bg-[#b32f00]" /><p className={sub}>US</p></div>
      <div className="mt-[13px]"><OptionRow art="bg-[#12296e]">ACH Payment</OptionRow></div>
      <div className="mt-[2px]"><OptionRow art="bg-[#12296e]">Pay by wire</OptionRow></div>
      <div className="flex items-center h-[6.5px] mt-[1px] ml-[3px] pl-[2px] bg-[#f7f8f9]"><p className={sub}>Enter account number</p></div>
      <div className="mt-[14px]"><OptionRow art="bg-[#12296e]">Deposit Address</OptionRow></div>
      <div className="mt-[3.5px]"><OptionRow art="bg-[#12296e]">Mailing Address</OptionRow></div>
      <div className="flex items-center h-[6.5px] mt-[1px] ml-[3px] pl-[2px] bg-[#f7f8f9]"><p className={sub}>200 Vesey Street</p></div>
      <p className={`${link} ml-[3px]`}>Add Address Line or Location</p>
      <p className={`${tiny} ml-[3px] mt-[0.5px]`}>City</p>
      <div className="flex items-center h-[6.5px] ml-[3px] pl-[2px] bg-[#f7f8f9]"><p className={sub}>New York</p></div>
      <div className="flex gap-[2px] ml-[3px] mt-[1px]">
        <div className="flex flex-col w-[32px]"><p className={tiny}>State</p><div className="flex items-center h-[7px] pl-[2px] bg-[#f7f8f9]"><p className={sub}>NY</p></div></div>
        <div className="flex flex-col w-[11px]"><p className={tiny}>ZIP Code</p><div className="flex items-center h-[7px] pl-[2px] bg-[#f7f8f9]"><p className={sub}>10285</p></div></div>
      </div>
      <MasterCard label="MASTER COMPONENT" w="w-[48px]" h="h-[17.7px]" className="mt-[36.5px]" />
      <MasterCard label="MOBILE" w="w-[43px]" h="h-[20px]" className="mt-[5.3px]" />
      <MasterCard label="MASTER COMPONENT" w="w-[48px]" h="h-[17px]" className="mt-[35px]" />
      <MasterCard label="MOBILE" w="w-[43px]" h="h-[20px]" className="mt-[10px]" />
    </div>
  </div>
);

const white = "bg-white";

export default function App() {
  return (
    <div className="relative w-[2500px] h-[971px] overflow-hidden whitespace-nowrap bg-[#e6e6e6] font-['Roboto',sans-serif]">
      <div className="absolute inset-0 blur-[0.5px]">
        <div className="absolute left-0 top-0 w-[2.5px] h-full bg-[#f1f1f1]" />

        <Frame label="Primary Co..." className="left-[35px] top-[71px] w-[121px]" box={`h-[103px] ${white}`}><Colors /></Frame>
        <Frame label="Secondary ..." className="left-[181px] top-[71px] w-[121px]" box={`h-[103px] ${white}`}><SecondaryColors /></Frame>
        <Frame label="Grids..." className="left-[416px] top-[59px] w-[73px]" box={`h-[96px] ${white}`}>
          <div className="flex flex-col gap-[2px] pl-[8px] pt-[10px]">
            {gridSizes.map((s, i) => <span key={i} className={`bg-[#efd3cc] ${s}`} />)}
          </div>
        </Frame>
        <Frame label="Status" className="left-[511px] top-[59px] w-[93px]" box={`h-[477px] ${white}`}><Status /></Frame>
        <Frame label="Header" className="left-[35px] top-[332px] w-[316px]" box={`h-[135px] ${white}`}><HeaderFrame /></Frame>
        <Frame label="Footer" className="left-[35px] top-[505px] w-[316px]" box={`h-[179px] ${white}`}><Footer /></Frame>
        <Frame label="BCA / Background" className="left-[35px] top-[719px] w-[316px]" box={`h-[106px] ${white}`}>
          <div className="flex items-start gap-[14.3px] pl-[7.4px] pt-[10.7px]">
            <div className="w-[47px] h-[85.5px] bg-[#12296e] border-[0.5px] border-[#3b5499]" />
            <div className="w-[93px] h-[7px] bg-[#12296e] border-[0.5px] border-[#3b5499]" />
          </div>
        </Frame>
        <Frame label="Drawers" className="left-[37px] top-[898px] w-[314px]" box={`h-[60px] ${white}`}><Drawers /></Frame>

        <Frame label="Icons" className="left-[654px] top-[73px] w-[85px]" box="h-[168px] bg-black">
          <div className="flex flex-col gap-[6px] pl-[9px] pt-[8.5px]">
            <span className="w-[3px] h-[1.2px] bg-[#1f5fb0]" />
            <span className="w-[3px] h-[1.2px] bg-[#e8e8e8]" />
          </div>
        </Frame>
        <Frame label="Glyphs" className="left-[751px] top-[73px] w-[109px]" box={`h-[168px] ${white}`}>
          <div className="flex items-center gap-[9px] pl-[21px] pt-[8px]">
            <div className="flex items-center gap-[1px]"><span className="w-[2px] h-[3px] bg-[#1a3f8f]" /><p className={tiny}>Secure Payment</p></div>
            <div className="flex items-center gap-[1px] h-[5px] pl-[6px] pr-[2px] border-[0.5px] border-[#e89a86]"><span className="w-[2px] h-[3px] bg-[#1a3f8f]" /><p className={tiny}>Secure Pay</p></div>
          </div>
        </Frame>
        <Frame label="Toast" className="left-[650px] top-[403px] w-[205px]" box={`h-[143px] ${white}`}><Toast /></Frame>

        <Frame label="Account Names" className="left-[957px] top-[57px] w-[143px]" box={`h-[49px] ${white}`}>
          <div className="flex flex-col gap-[2px] pl-[7px] pt-[5.8px]">
            <AccName />
            <AccName>Platinum Card® ••• 1234</AccName>
          </div>
        </Frame>
        <Frame label="Card Backgro..." className="left-[957px] top-[125px] w-[143px]" box={`h-[91px] ${white}`}><CardBackgrounds /></Frame>
        <Frame label="Account Filled..." className="left-[956px] top-[233px] w-[144px]" box={`h-[303px] ${white}`}><AccountFilledLarge /></Frame>
        <Frame label="Account Filled..." className="left-[956px] top-[568px] w-[144px]" box={`h-[126px] ${white}`}><AccountFilledCompact /></Frame>
        <Frame label="Account Filled..." className="left-[956px] top-[757px] w-[144px]" box={`h-[214px] ${white}`}><AccountFilledList /></Frame>
        <Frame label="Cards" className="left-[1219px] top-[57px] w-[132px]" box={`h-[180px] ${white}`}><CardsFrame /></Frame>
        <Frame label="Interest / Re..." className="left-[1219px] top-[252px] w-[132px]" box={`h-[99px] ${white}`}><InterestFrame /></Frame>
        <Frame label="Transactions" className="left-[1219px] top-[374px] w-[132px]" box={`h-[161px] ${white}`}><TransactionsFrame /></Frame>
        <Frame label="Onboarding" className="left-[1219px] top-[573px] w-[132px]" box={`h-[126px] ${white}`}><OnboardingFrame /></Frame>

        <Frame label="Global Nav" className="left-[1505px] top-[73px] w-[344px]" box={`h-[246px] ${white}`}><GlobalNav /></Frame>
        <Frame label="Global Acti..." className="left-[1869px] top-[73px] w-[124px]" box={`h-[246px] ${white}`}><GlobalActions /></Frame>
        <Frame label="Pagination" className="left-[1510px] top-[385px] w-[111px]" box={`h-[152px] ${white}`}><Pagination /></Frame>

        <Frame label="Cards" className="left-[2146px] top-[48px] w-[354px]" box={`h-[466px] ${white}`}><Payments /></Frame>

        <Heading className="left-[35px] top-[24px] w-[266px] pb-[6.5px]">Colors</Heading>
        <Heading className="left-[416px] top-[24px] w-[186px] pb-[6.5px]">Grids &amp; Spacing</Heading>
        <Heading className="left-[35px] top-[301px] w-[316px] pb-[5.5px]">Header</Heading>
        <Heading className="left-[37px] top-[885px] w-[314px] pb-[0.5px]">Drawers</Heading>
        <Heading className="left-[654px] top-[24.5px] w-[206px] pb-[8.5px]">Icons &amp; Glyphs</Heading>
        <Heading className="left-[654px] top-[355px] w-[190px] pb-[0.5px]">System Elements</Heading>
        <Heading className="left-[952px] top-[24px] w-[395px] pb-[8.5px]">Page Templates</Heading>
        <Heading className="left-[1505px] top-[24px] w-[488px] pb-[8.5px]">Menu and Navigation</Heading>
        <Heading className="left-[2146px] top-[14px] w-[354px] pb-[8px]">Payments</Heading>
      </div>
    </div>
  );
}
